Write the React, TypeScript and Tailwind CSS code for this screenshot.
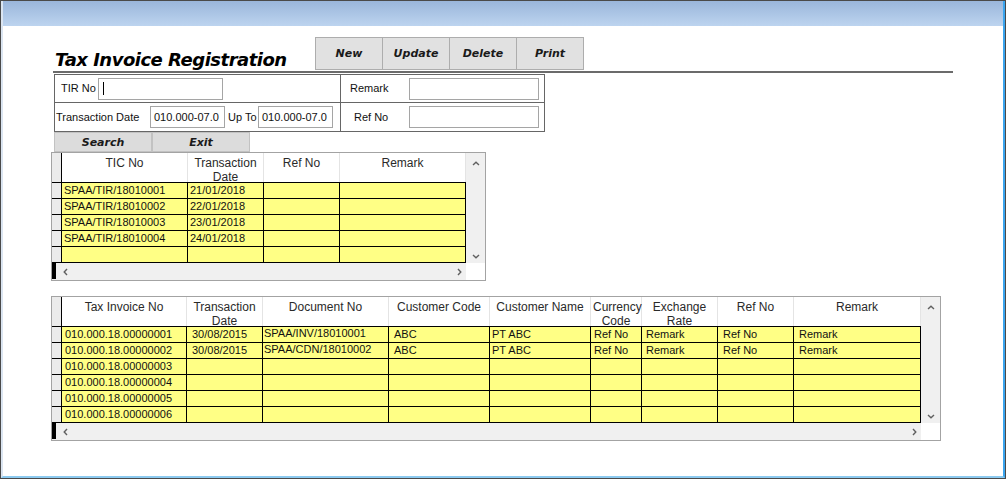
import React from 'react';

type Col = { label: string; w: string; pl: string; lead?: string };

const label = "font-['Liberation_Sans',Arial,sans-serif] text-[11px] text-[#111]";
const bolditalic = "font-['DejaVu_Sans',Verdana,sans-serif] font-bold italic text-[#1a1a1a]";

function ChevronLeft() {
  return (
    <svg width="5" height="8" viewBox="0 0 5 8">
      <path d="M4 1 L1.2 4 L4 7" stroke="#606060" strokeWidth="1.4" fill="none" />
    </svg>
  );
}

function ChevronRight() {
  return (
    <svg width="5" height="8" viewBox="0 0 5 8">
      <path d="M1 1 L3.8 4 L1 7" stroke="#606060" strokeWidth="1.4" fill="none" />
    </svg>
  );
}

function ChevronUp() {
  return (
    <svg width="8" height="5" viewBox="0 0 8 5">
      <path d="M1 4 L4 1.2 L7 4" stroke="#606060" strokeWidth="1.4" fill="none" />
    </svg>
  );
}

function ChevronDown() {
  return (
    <svg width="8" height="5" viewBox="0 0 8 5">
      <path d="M1 1 L4 3.8 L7 1" stroke="#606060" strokeWidth="1.4" fill="none" />
    </svg>
  );
}

function Grid({ cols, rows, tableW }: { cols: Col[]; rows: string[][]; tableW: string }) {
  return (
    <div className="w-fit flex flex-col border border-[#a3a3a3]">
      <div className="flex">
        <div className={`${tableW} flex flex-col`}>
          {/* header */}
          <div className="flex h-[29px] bg-white">
            <div className="w-[10px] bg-[#ebebeb] border-r border-black" />
            {cols.map((c, i) => (
              <div
                key={i}
                className={`${c.w} border-r border-[#e4e4e4] pt-[3px] px-[2px] text-center font-['Liberation_Sans',Arial,sans-serif] text-[12px] leading-[14px] text-[#2a2a2a]`}
              >
                {c.label}
              </div>
            ))}
          </div>
          {/* rows */}
          <div className="flex flex-col border-b border-black">
            {rows.map((r, ri) => (
              <div key={ri} className="flex h-[16px] border-t border-black">
                <div className="w-[10px] bg-[#ebebeb] border-r border-black" />
                {cols.map((c, ci) => (
                  <div
                    key={ci}
                    className={`${c.w} ${c.pl} ${c.lead ?? 'leading-[15px]'} bg-[#ffff85] border-r border-black whitespace-nowrap overflow-hidden ${label}`}
                  >
                    {r[ci]}
                  </div>
                ))}
              </div>
            ))}
          </div>
        </div>
        {/* vertical scrollbar */}
        <div className="w-[19px] bg-[#f0f0f0] flex flex-col items-center justify-between pt-[8px] pb-[4px]">
          <ChevronUp />
          <ChevronDown />
        </div>
      </div>
      {/* horizontal scrollbar */}
      <div className="flex h-[17px]">
        <div className={`${tableW} bg-[#f0f0f0] flex items-center`}>
          <div className="w-[4px] h-[16px] bg-black self-start" />
          <div className="ml-[7px]">
            <ChevronLeft />
          </div>
          <div className="flex-1" />
          <div className="mr-[4px]">
            <ChevronRight />
          </div>
        </div>
        <div className="w-[19px] bg-white" />
      </div>
    </div>
  );
}

const ticCols: Col[] = [
  { label: 'TIC No', w: 'w-[126px]', pl: 'pl-[2px]' },
  { label: 'Transaction Date', w: 'w-[76px]', pl: 'pl-[2px]' },
  { label: 'Ref No', w: 'w-[76px]', pl: 'pl-[2px]' },
  { label: 'Remark', w: 'w-[126px]', pl: 'pl-[2px]' },
];

const ticRows = [
  ['SPAA/TIR/18010001', '21/01/2018', '', ''],
  ['SPAA/TIR/18010002', '22/01/2018', '', ''],
  ['SPAA/TIR/18010003', '23/01/2018', '', ''],
  ['SPAA/TIR/18010004', '24/01/2018', '', ''],
  ['', '', '', ''],
];

const invCols: Col[] = [
  { label: 'Tax Invoice No', w: 'w-[125px]', pl: 'pl-[3px]' },
  { label: 'Transaction Date', w: 'w-[76px]', pl: 'pl-[5px]' },
  { label: 'Document No', w: 'w-[126px]', pl: 'pl-[1px]', lead: 'leading-[12px]' },
  { label: 'Customer Code', w: 'w-[101px]', pl: 'pl-[5px]' },
  { label: 'Customer Name', w: 'w-[101px]', pl: 'pl-[2px]' },
  { label: 'Currency Code', w: 'w-[51px]', pl: 'pl-[3px]' },
  { label: 'Exchange Rate', w: 'w-[76px]', pl: 'pl-[4px]' },
  { label: 'Ref No', w: 'w-[76px]', pl: 'pl-[5px]' },
  { label: 'Remark', w: 'w-[127px]', pl: 'pl-[5px]' },
];

const invRows = [
  ['010.000.18.00000001', '30/08/2015', 'SPAA/INV/18010001', 'ABC', 'PT ABC', 'Ref No', 'Remark', 'Ref No', 'Remark'],
  ['010.000.18.00000002', '30/08/2015', 'SPAA/CDN/18010002', 'ABC', 'PT ABC', 'Ref No', 'Remark', 'Ref No', 'Remark'],
  ['010.000.18.00000003', '', '', '', '', '', '', '', ''],
  ['010.000.18.00000004', '', '', '', '', '', '', '', ''],
  ['010.000.18.00000005', '', '', '', '', '', '', '', ''],
  ['010.000.18.00000006', '', '', '', '', '', '', '', ''],
];

function Field({ w, children }: { w: string; children?: React.ReactNode }) {
  return (
    <div className={`${w} h-[22px] border border-[#a5a5a5] bg-white flex items-center pl-[3px] ${label}`}>
      {children}
    </div>
  );
}

export default function App() {
  return (
    <div className="w-[1006px] h-[479px] border border-[#4a4a4a] bg-white flex flex-col overflow-hidden">
      <div className="flex-1 flex flex-col border-l-2 border-l-[#dbe5f1] border-r-2 border-r-[#3ba5ef] border-b-2 border-b-[#8ccaf0]">
        {/* title bar */}
        <div className="h-[25px] bg-gradient-to-b from-[#9ab6db] to-[#bdd4ef]" />

        {/* content */}
        <div className="flex-1 flex flex-col bg-white">
          {/* heading row */}
          <div className="ml-[50px] mt-[11px] w-[900px] flex items-end pb-[1px] border-b-2 border-[#6b6b6b]">
            <div className={`w-[262px] pl-[2px] text-[18px] leading-[20px] tracking-[-0.5px] whitespace-nowrap ${bolditalic} text-black`}>
              Tax Invoice Registration
            </div>
            <div className="flex">
              {['New', 'Update', 'Delete', 'Print'].map((b, i) => (
                <div
                  key={b}
                  className={`w-[68px] h-[33px] pt-[2px] bg-[#e1e1e1] border border-[#adadad] flex items-center justify-center text-[11px] ${bolditalic} ${i > 0 ? '-ml-px' : ''}`}
                >
                  {b}
                </div>
              ))}
            </div>
          </div>

          {/* filter box */}
          <div className="ml-[51px] mt-[1px] w-[491px] border border-[#666] flex">
            <div className="w-[286px] border-r border-[#666] flex flex-col">
              <div className="h-[28px] flex items-center pl-[6px] border-b border-[#666]">
                <span className={`w-[37px] ${label}`}>TIR No</span>
                <Field w="w-[125px]">
                  <span className="ml-[1px] w-px h-[13px] bg-black" />
                </Field>
              </div>
              <div className="h-[28px] flex items-center pl-[1px]">
                <span className={`w-[94px] ${label}`}>Transaction Date</span>
                <Field w="w-[75px]">010.000-07.0</Field>
                <span className={`w-[33px] pl-[3px] ${label}`}>Up To</span>
                <Field w="w-[75px]">010.000-07.0</Field>
              </div>
            </div>
            <div className="flex-1 flex flex-col">
              <div className="h-[28px] flex items-center pl-[9px] border-b border-[#666]">
                <span className={`w-[59px] ${label}`}>Remark</span>
                <Field w="w-[130px]" />
              </div>
              <div className="h-[28px] flex items-center pl-[13px]">
                <span className={`w-[55px] ${label}`}>Ref No</span>
                <Field w="w-[130px]" />
              </div>
            </div>
          </div>

          {/* search / exit */}
          <div className="ml-[51px] flex">
            {['Search', 'Exit'].map((b) => (
              <div
                key={b}
                className={`w-[98px] h-[20px] pt-[2px] bg-[#dcdcdc] border border-[#c2c2c2] flex items-center justify-center text-[11px] ${bolditalic}`}
              >
                {b}
              </div>
            ))}
          </div>

          {/* TIC grid */}
          <div className="ml-[48px]">
            <Grid cols={ticCols} rows={ticRows} tableW="w-[414px]" />
          </div>

          {/* invoice grid */}
          <div className="ml-[48px] mt-[15px]">
            <Grid cols={invCols} rows={invRows} tableW="w-[869px]" />
          </div>
        </div>
      </div>
    </div>
  );
}
